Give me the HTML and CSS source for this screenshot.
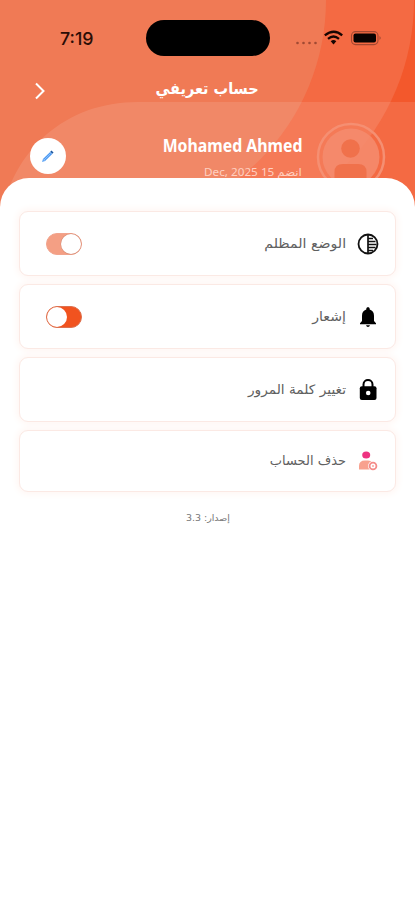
FILE: index.html
```html
<!DOCTYPE html>
<html lang="ar" dir="rtl">
<head>
<meta charset="utf-8">
<title>حساب تعريفي</title>
<link rel="stylesheet" href="styles.css">
</head>
<body>
<div class="screen">
  <header class="hero">
    <svg class="waves" width="415" height="220" viewBox="0 0 415 220">
      <rect width="415" height="220" fill="#f3582c"/>
      <circle cx="180" cy="0" r="234" fill="#f46a43"/>
      <rect width="180" height="220" fill="#f07a55"/>
      <circle cx="100" cy="0" r="226" fill="#f07a55"/>
      <path d="M0 220C12 150 65 102 138 102H415V220Z" fill="#fff" fill-opacity=".11"/>
    </svg>
    <div class="status" dir="ltr">
      <span class="time">7:19</span>
      <span class="island"></span>
      <span class="signals">
        <svg width="90" height="18" viewBox="0 0 90 18">
          <g fill="#873b28" fill-opacity=".75"><circle cx="3.5" cy="14" r="1.3"/><circle cx="9.5" cy="14" r="1.3"/><circle cx="15.5" cy="14" r="1.3"/><circle cx="21.500" cy="14" r="1.3"/></g>
          <g fill="none" stroke="#160502" stroke-width="2.300"><path d="M30.800 6.400Q40 -1 48.200 6.400"/><path d="M34 9.800Q39.500 5.300 45 9.800"/></g>
          <path d="M36.700 12.200Q39.500 10 42.300 12.200L39.500 15.500Z" fill="#160502"/>
          <rect x="57.500" y="2.600" width="26.500" height="13" rx="4" fill="none" stroke="#a34831" stroke-width="1.100"/>
          <rect x="59.500" y="4.600" width="22.500" height="9" rx="2" fill="#080201"/>
          <path d="M85.500 7V11Q88 9 85.500 7Z" fill="#a34831"/>
        </svg>
      </span>
    </div>
    <div class="bar">
      <h1 class="title"><span>حساب تعريفي</span></h1>
      <svg class="next" width="14" height="20" viewBox="0 0 14 20"><path d="M3 2.500L10.500 10L3 17.500" fill="none" stroke="#fff" stroke-width="2"/></svg>
    </div>
    <div class="profile">
      <svg class="avatar" width="70" height="70" viewBox="0 0 70 70">
        <circle cx="35" cy="35" r="33" fill="none" stroke="#f58f72" stroke-width="2.500"/>
        <circle cx="35" cy="35" r="28.500" fill="#f58c6e" fill-opacity=".85"/>
        <circle cx="34.500" cy="26.500" r="9.300" fill="#f0714b"/>
        <path d="M18.500 62V50Q18.500 42 27 42H42Q50.500 42 50.500 50V62Z" fill="#f0714b"/>
      </svg>
      <div class="who">
        <div class="name" dir="ltr">Mohamed Ahmed</div>
        <div class="joined"><span>انضم 15 Dec, 2025</span></div>
      </div>
      <div class="edit">
        <svg width="14" height="14" viewBox="0 0 14 14"><path d="M3 11L10.200 4" stroke="#4b99f3" stroke-width="3"/><path d="M3 11L9.500 4.700" stroke="#90c2fa" stroke-width="1"/><path d="M1 13L2 9.800L4.300 12.100Z" fill="#62a7f5"/><path d="M10.300 3.700L11.500 2.500" stroke="#19569f" stroke-width="3"/></svg>
      </div>
    </div>
  </header>
  <main class="sheet">
    <section class="card dark">
      <svg class="icon" width="22" height="22" viewBox="0 0 22 22"><circle cx="11" cy="11" r="9.500" fill="none" stroke="#111" stroke-width="1.800"/><path d="M11 1.500V20.500M11 5.500H16M11 8.500H18.500M11 11.500H19.500M11 14.500H18.500M11 17.500H16" fill="none" stroke="#111" stroke-width="1.700"/></svg>
      <span class="label l1">الوضع المظلم</span>
      <span class="toggle soft"><i></i></span>
    </section>
    <section class="card notify">
      <svg class="icon" width="22" height="22" viewBox="0 0 22 22"><path d="M11 1.200C12.100 1.200 12.700 1.900 12.700 2.900V3.600C15.600 4.500 17 6.800 17 9.700V15L19 17.200V18.200H3V17.200L5 15V9.700C5 6.800 6.400 4.500 9.300 3.600V2.900C9.300 1.900 9.900 1.200 11 1.200ZM9 19.200H13Q12.500 21 11 21Q9.500 21 9 19.200Z" fill="#000"/></svg>
      <span class="label l2">إشعار</span>
      <span class="toggle"><i></i></span>
    </section>
    <section class="card password">
      <svg class="icon" width="22" height="24" viewBox="0 0 22 24"><path d="M6.500 10V6.500C6.500 0.600 15.500 0.600 15.500 6.500V10" fill="none" stroke="#000" stroke-width="2"/><rect x="2.800" y="8.200" width="16.700" height="13.800" rx="2" fill="#000"/><circle cx="11.200" cy="15" r="2.300" fill="#fff"/></svg>
      <span class="label l3">تغيير كلمة المرور</span>
    </section>
    <section class="card remove">
      <svg class="icon" width="22" height="22" viewBox="0 0 22 22"><ellipse cx="9.200" cy="5" rx="4" ry="3.500" fill="#ee3381"/><path d="M2 19.500V16Q2 10.500 8 10.500H11Q14 10.500 15.500 12V19.500Z" fill="#f8a18e"/><circle cx="16" cy="16" r="4.900" fill="#fff"/><circle cx="16" cy="16" r="3.400" fill="#fff" stroke="#f58b88" stroke-width="1.800"/><path d="M15 15L17 17M17 15L15 17" stroke="#f8aaa4" stroke-width=".8"/></svg>
      <span class="label l4">حذف الحساب</span>
    </section>
    <footer class="version"><span>إصدار: 3.3</span></footer>
  </main>
</div>
</body>
</html>
```
FILE: styles.css
```css
* { box-sizing: border-box; }
body { margin: 0; background: #fff; font-family: "DejaVu Sans", sans-serif; }
.screen { width: 415px; height: 900px; overflow: hidden; }
.hero { position: relative; isolation: isolate; height: 178px; }
.waves { position: absolute; top: 0; left: 0; z-index: -1; display: block; }
.status { display: grid; grid-template-columns: 146px 124px 1fr; height: 56px; padding-top: 20px; }
.time { padding: 8px 0 0 60px; font: 500 17.8px/22px Inter, sans-serif; color: #2b0d06; }
.island { height: 36px; border-radius: 18px; background: #000; }
.signals { padding: 9px 0 0 24px; }
.bar { display: grid; grid-template-columns: 1fr auto 1fr; align-items: center; height: 66px; }
.title { grid-column: 2; margin: 0; font-size: 16px; line-height: 24px; color: #fff; white-space: nowrap; }
.title span, .joined span, .label, .version span { display: inline-block; }
.title span { transform: scaleX(.905); }
.next { justify-self: end; margin-left: 33px; margin-top: 4px; }
.profile { display: flex; align-items: flex-start; padding: 0 29px 0 30px; }
.avatar { flex: none; }
.who { margin-right: 14px; margin-top: 11px; }
.name { font: 700 17.5px/24px "Noto Sans", sans-serif; color: #fff; white-space: nowrap; transform: scaleX(.905); transform-origin: right center; }
.joined { margin-top: 5px; font-family: "Noto Sans", "DejaVu Sans", sans-serif; font-size: 11px; line-height: 20px; color: #ffd0c1; white-space: nowrap; }
.joined span { transform: scaleX(1.065); transform-origin: right center; }
.edit { display: grid; place-items: center; width: 36px; height: 36px; margin: 16px auto 0 0; border-radius: 50%; background: #fff; }
.sheet { position: relative; height: 722px; padding: 33px 19px 0; border-radius: 29px 29px 0 0; background: #fff; }
.card { display: flex; align-items: center; height: 65px; margin-bottom: 8px; padding: 0 16px 0 26px; border: 1px solid #fbe9e4; border-radius: 9px; background: #fff; box-shadow: 0 0 7px 2px #fff6f3; }
.remove { height: 62px; margin-bottom: 0; }
.icon { flex: none; }
.label { margin-right: 11px; font-size: 13px; line-height: 24px; color: #606060; white-space: nowrap; transform-origin: right center; }
.l1 { transform: scaleX(1.09); }
.l2 { transform: scaleX(1.09); }
.l3 { transform: scaleX(1.055); }
.toggle { display: flex; align-items: center; width: 36px; height: 22px; margin-right: auto; border: 1px solid #dd714f; border-radius: 11px; background: #f1531f; }
.toggle i { width: 20px; height: 20px; margin-right: auto; border-radius: 50%; background: #fff; }
.soft { background: #f49f84; border-color: #f2a48d; }
.soft i { margin: 0; box-shadow: 0 0 0 .5px #d58a73; }
.version { margin-top: 16px; font-size: 9px; line-height: 20px; text-align: center; color: #777; }
.version span { transform: scaleX(1.05); }
```
